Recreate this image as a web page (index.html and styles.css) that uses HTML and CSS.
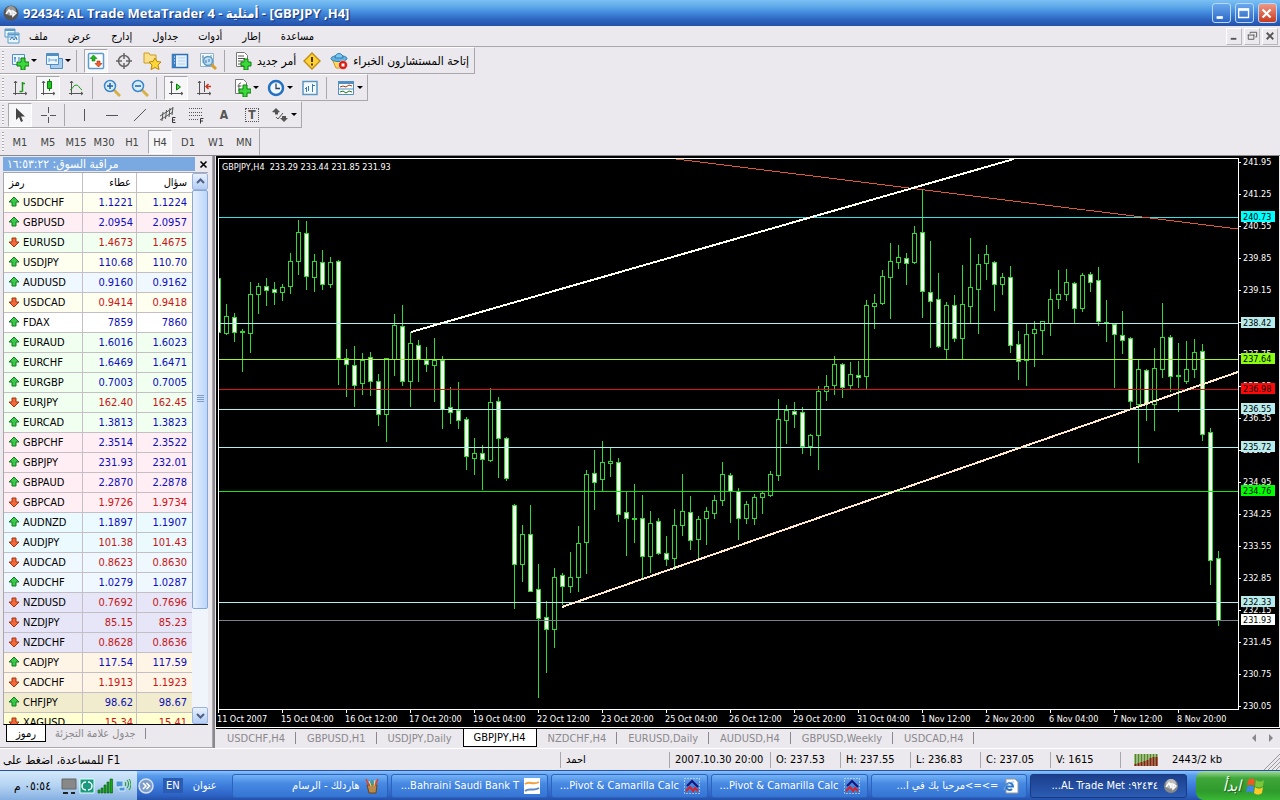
FILE: index.html
```html
<!DOCTYPE html>
<html lang="ar">
<head>
    <meta charset="UTF-8">
    <meta name="viewport" content="width=device-width, initial-scale=1.0">
    <title>MetaTrader 4</title>
    <link rel="stylesheet" href="styles.css">
</head>
<body>

<header class="titlebar">
    <svg class="icon" viewBox="0 0 16 16"><circle cx="8" cy="8" r="7.5" fill="#555"/><circle cx="8" cy="6" r="5" fill="#999"/><path d="M3 9l3-4 2 4M8 5v5M10 6l3 2-3 3z" stroke="#fff" stroke-width="1.5" fill="none"/></svg>
    <h1>92434: AL Trade MetaTrader 4 - <bdi>أمثلية</bdi> - [GBPJPY ,H4]</h1>
    <div class="window-buttons">
        <button aria-label="Minimize"><svg viewBox="0 0 19 19"><path d="M4 14h7" stroke="#fff" stroke-width="3"/></svg></button>
        <button aria-label="Maximize"><svg viewBox="0 0 19 19"><path d="M3 5v9h11V5" stroke="#fff" fill="none" stroke-width="1.5"/><path d="M2.300 5h12.400" stroke="#fff" stroke-width="3"/></svg></button>
        <button class="close" aria-label="Close"><svg viewBox="0 0 19 19"><path d="M4 5l9 9M13 5l-9 9" stroke="#fff" stroke-width="2.400"/></svg></button>
    </div>
</header>

<nav class="menu">
    <svg class="icon" viewBox="0 0 16 16"><path d="M1 1h10v8H1zM4 5h11v10H4z" fill="#eaf6ff" stroke="#5d9bc9"/><path d="M1 2h10M4 6.5h11" stroke="#5d9bc9" stroke-width="2"/><path d="M6 12l2-3 2 3 2-3 1 3" stroke="#3b78b5" fill="none"/></svg>
    <button>ملف</button>
    <button>عرض</button>
    <button>إدارج</button>
    <button>جداول</button>
    <button>أدوات</button>
    <button>إطار</button>
    <button>مساعدة</button>
    <div class="mdi-buttons">
        <button aria-label="Minimize chart"><svg viewBox="0 0 15 15"><path d="M4 10.5h6" stroke="#555" stroke-width="2"/></svg></button>
        <button aria-label="Restore chart"><svg viewBox="0 0 15 15"><path d="M5.5 5V3.5h7v5H11M3 6.5h7M3.5 6v5h6V6" stroke="#555" fill="none"/></svg></button>
        <button aria-label="Close chart"><svg viewBox="0 0 15 15"><path d="M4 4l7 7M11 4l-7 7" stroke="#555" stroke-width="2"/></svg></button>
    </div>
</nav>

<div class="toolbar">
    <button class="dropdown" aria-label="New chart"><svg viewBox="0 0 18 18"><path d="M1.500 2.500h12v10h-12z" fill="#eaf6ff" stroke="#4f8fc4"/><path d="M4 5v5M3 6h2M8 5v4" stroke="#3b78b5"/><path d="M10 6h4v4h4v4h-4v4h-4v-4H6v-4h4z" fill="#3ad83a" stroke="#0a7d0a"/></svg></button>
    <button class="dropdown" aria-label="Profiles"><svg viewBox="0 0 18 18"><path d="M5.5 6.5h12v10h-12z" fill="#a9cdea" stroke="#4f8fc4"/><path d="M1.5 1.5h12v11h-12z" fill="#eaf6ff" stroke="#4f8fc4"/><path d="M1 3h13" stroke="#4f8fc4" stroke-width="2"/><path d="M4 8h8M4 6v4M11 7v3" stroke="#6aa3d2"/></svg></button>
    <span class="sep"></span>
    <button class="pressed" aria-label="Market watch"><svg viewBox="0 0 18 18"><rect x="1.5" y="1.5" width="15" height="15" rx="1" fill="#fff" stroke="#5c9ccc" stroke-width="1.5"/><path d="M6.500 3L10 6.500H8V9H5V6.500H3z" fill="#22b422" stroke="#0a7d0a" stroke-width=".6"/><path d="M11.500 15L8 11.500h2V9h3v2.500h2z" fill="#f0602f" stroke="#a52a0a" stroke-width=".6"/></svg></button>
    <button aria-label="Data window"><svg viewBox="0 0 18 18"><circle cx="9" cy="9" r="5.5" fill="none" stroke="#666" stroke-width="1.5"/><path d="M9 1v6M9 11v6M1 9h6M11 9h6" stroke="#666" stroke-width="1.5"/></svg></button>
    <button aria-label="Navigator"><svg viewBox="0 0 18 18"><path d="M1 3V1h5l1 2h6v8H1z" fill="#fbe08a" stroke="#c89b25"/><path d="M12 6l2 3.500 4 .5-3 3 1 4.500-4-2-4 2 1-4.500-3-3 4-.5z" fill="#ffd735" stroke="#b98509"/></svg></button>
    <button aria-label="Terminal"><svg viewBox="0 0 18 18"><path d="M1.500 2.500h15v13h-15z" fill="#e4f2ff" stroke="#2f70b0" stroke-width="1.5"/><path d="M1 2.500h4v13H1z" fill="#3f7ec0"/><path d="M7 6h7M7 9h7M7 12h7" stroke="#b4cfe8"/><path d="M3 5h1M3 8h1M3 11h1" stroke="#fff"/></svg></button>
    <button aria-label="Strategy tester"><svg viewBox="0 0 18 18"><path d="M1.500 1.500h13v13h-13z" fill="#f5f9fc" stroke="#8fb3cf"/><path d="M4 3v8M3 5h2M12 3v5" stroke="#6b98bb"/><path d="M12 12l5 5" stroke="#d99f28" stroke-width="3"/><circle cx="9" cy="9" r="4.5" fill="#bfe0f5" stroke="#5c97c2" stroke-width="1.5"/><path d="M7 8v3M10 7v3" stroke="#3b78b5"/></svg></button>
    <span class="sep"></span>
    <button class="text-button"><svg viewBox="0 0 18 18"><path d="M2.500.5h8l3 3v11h-11z" fill="#fff" stroke="#777"/><path d="M4 4h6M4 6.500h7M4 9h5M4 12h4" stroke="#555"/><path d="M10 7h4v3h3v4h-3v4h-4v-4H7v-4h3z" fill="#3ad83a" stroke="#0a7d0a"/></svg>أمر جديد</button>
    <button aria-label="MetaEditor"><svg viewBox="0 0 18 18"><path d="M9 1l8 8-8 8-8-8z" fill="#ffd23a" stroke="#c18c10" stroke-width="1.4"/><path d="M9 5v5M9 11.500v2" stroke="#4d3a00" stroke-width="2"/></svg></button>
    <button class="text-button experts"><svg viewBox="0 0 18 18"><path d="M2 7h13l-3 9H6z" fill="#ffd95e" stroke="#c79a22"/><ellipse cx="9" cy="6.5" rx="8" ry="3" fill="#63b4e4" stroke="#2b7cb0"/><path d="M5 6c0-6 8-6 8 0z" fill="#7cc6ef" stroke="#2b7cb0"/><circle cx="13" cy="13" r="4.5" fill="#d61f14" stroke="#fff" stroke-width=".5"/><path d="M11.500 11.500h3v3h-3z" fill="#fff"/></svg>إتاحة المستشارون الخبراء</button>
</div>

<div class="toolbar">
    <button aria-label="Bar chart"><svg viewBox="0 0 18 18"><path d="M4.500 2v14M2 14.500h14M3 4l1.500-2L6 4M14 13l2 1.500-2 1.500" stroke="#555" fill="none"/><path d="M8.500 12.500h3M11.500 3v9.500M11 4.500h3" stroke="#179a17" stroke-width="1.5"/></svg></button>
    <button class="pressed" aria-label="Candlesticks"><svg viewBox="0 0 18 18"><path d="M4.500 2v14M2 14.500h14M3 4l1.500-2L6 4M14 13l2 1.500-2 1.500" stroke="#555" fill="none"/><path d="M10.500 0v12" stroke="#0a7d0a"/><path d="M8.500 2.500h4v7h-4z" fill="#22c422" stroke="#0a7d0a"/></svg></button>
    <button aria-label="Line chart"><svg viewBox="0 0 18 18"><path d="M4.500 2v14M2 14.500h14M3 4l1.500-2L6 4M14 13l2 1.500-2 1.500" stroke="#555" fill="none"/><path d="M3 11c3-1 3-5 6-5s3 3 6 5" stroke="#179a17" fill="none"/></svg></button>
    <span class="sep"></span>
    <button aria-label="Zoom in"><svg viewBox="0 0 18 18"><path d="M11 11l6 6" stroke="#d9b048" stroke-width="3"/><circle cx="7" cy="7" r="5.5" fill="#d8eeff" stroke="#3c86c8" stroke-width="1.5"/><path d="M4 7h6M7 4v6" stroke="#1f63ac" stroke-width="1.5"/></svg></button>
    <button aria-label="Zoom out"><svg viewBox="0 0 18 18"><path d="M11 11l6 6" stroke="#d9b048" stroke-width="3"/><circle cx="7" cy="7" r="5.5" fill="#d8eeff" stroke="#3c86c8" stroke-width="1.5"/><path d="M4 7h6" stroke="#1f63ac" stroke-width="1.5"/></svg></button>
    <span class="sep"></span>
    <button class="pressed" aria-label="Auto scroll"><svg viewBox="0 0 18 18"><path d="M4.500 2v14M2 14.500h14M3 4l1.500-2L6 4M14 13l2 1.500-2 1.500" stroke="#555" fill="none"/><path d="M9.500 5l4 3-4 3z" fill="#5ad85a" stroke="#0a7d0a"/></svg></button>
    <button aria-label="Chart shift"><svg viewBox="0 0 18 18"><path d="M4.500 2v14M2 14.500h14M3 4l1.500-2L6 4M14 13l2 1.500-2 1.500M9.500 2v11" stroke="#555" fill="none"/><path d="M16 7.500h-5M13.500 5L11 7.500l2.500 2.500" stroke="#c8371a" stroke-width="1.5" fill="none"/></svg></button>
    <span class="spacer"></span>
    <button class="dropdown" aria-label="Indicators"><svg viewBox="0 0 18 18"><path d="M2.500.5h8l3 3v11h-11z" fill="#fff" stroke="#777"/><path d="M8 4c-3 0-2 2-2 8M4.500 7h4" stroke="#555" fill="none"/><path d="M10 6h4v4h4v4h-4v4h-4v-4H6v-4h4z" fill="#3ad83a" stroke="#0a7d0a"/></svg></button>
    <button class="dropdown" aria-label="Periods"><svg viewBox="0 0 18 18"><circle cx="9" cy="9" r="7" fill="#eef6ff" stroke="#2170c2" stroke-width="2.5"/><path d="M9 4.500V9.500h4" stroke="#345" stroke-width="1.3" fill="none"/></svg></button>
    <button aria-label="Templates"><svg viewBox="0 0 18 18"><path d="M2 2.500h14v13H2z" fill="#f2f9ff" stroke="#5c97c2" stroke-width="1.5"/><path d="M5.500 8v5M7.500 7v5M11.500 5v8M4 9.500h2M11 6.500h3" stroke="#3b78b5"/></svg></button>
    <span class="sep"></span>
    <button class="dropdown" aria-label="Layout"><svg viewBox="0 0 18 18"><path d="M1.500 2.500h15v13h-15z" fill="#fff" stroke="#4f8fc4"/><path d="M1 3.500h16" stroke="#4f8fc4" stroke-width="3"/><path d="M3 8l3-1 3 1 3-2 3 1" stroke="#a2381e" fill="none"/><path d="M2 10h14" stroke="#4f8fc4"/><path d="M3 13l3-1 3 2 3-2 3 1" stroke="#1b7a1b" fill="none"/></svg></button>
</div>

<div class="toolbar">
    <button class="pressed" aria-label="Cursor"><svg viewBox="0 0 18 18"><path d="M5 2v12l3-3 2 5 2-1-2-4.500h4z" fill="#444"/></svg></button>
    <button aria-label="Crosshair"><svg viewBox="0 0 18 18"><path d="M9.500 1v6M9.500 11v6M2 9.500h6M11 9.500h6" stroke="#555"/></svg></button>
    <span class="sep"></span>
    <button aria-label="Vertical line"><svg viewBox="0 0 18 18"><path d="M9.500 3v12" stroke="#555"/></svg></button>
    <button aria-label="Horizontal line"><svg viewBox="0 0 18 18"><path d="M3 9.500h12" stroke="#555"/></svg></button>
    <button aria-label="Trendline"><svg viewBox="0 0 18 18"><path d="M3 15L15 3" stroke="#555"/></svg></button>
    <button aria-label="Equidistant channel"><svg viewBox="0 0 18 18"><path d="M1 10L14 2M1 14l13-8M4 6l-1 9M7.500 4l-1 9M11 2l-1 9M14 1l-1 8" stroke="#555" fill="none"/><path d="M16.500 11.500h-3v5h3M13.500 14H16" stroke="#333" fill="none"/></svg></button>
    <button aria-label="Fibonacci"><svg viewBox="0 0 18 18"><path d="M2 2.500h14M2 6.500h14M2 9.500h14M2 13.500h9" stroke="#555" stroke-dasharray="1 1"/><path d="M16.500 12.500h-3v5M13.500 15H16" stroke="#333" fill="none"/></svg></button>
    <button class="letter">A</button>
    <button class="letter boxed">T</button>
    <button class="dropdown" aria-label="Arrows"><svg viewBox="0 0 18 18"><path d="M5 2l4 4-2 .5v2H4v-2L1 6z" fill="#555"/><path d="M13 16l-4-4h2v-2h4v2h2z" fill="#555"/><path d="M5 11l2 2 5-6" stroke="#555" fill="none"/></svg></button>
</div>

<div class="toolbar periods">
    <button>M1</button>
    <button>M5</button>
    <button>M15</button>
    <button>M30</button>
    <button>H1</button>
    <button class="pressed">H4</button>
    <button>D1</button>
    <button>W1</button>
    <button>MN</button>
</div>

<main class="workspace">
    <section class="watch">
        <div class="watch-title">
            <span dir="rtl">مراقبة السوق: ١٦:٥٣:٢٢</span>
            <button aria-label="Close panel"><svg viewBox="0 0 9 9"><path d="M1.500 1.500l6 6M7.500 1.500l-6 6" stroke="#000" stroke-width="1.6"/></svg></button>
        </div>
        <div class="watch-body">
            <div class="table-wrap">
                <table>
                    <thead>
                        <tr><th>رمز</th><th>عطاء</th><th>سؤال</th></tr>
                    </thead>
                    <tbody id="quotes"></tbody>
                </table>
            </div>
            <div class="scrollbar">
                <button aria-label="Scroll up"><svg viewBox="0 0 9 9"><path d="M1 6l3.500-3.500L8 6" stroke="#4d6185" stroke-width="2" fill="none"/></svg></button>
                <div class="track"><div class="thumb"><i></i></div></div>
                <button aria-label="Scroll down"><svg viewBox="0 0 9 9"><path d="M1 3l3.500 3.500L8 3" stroke="#4d6185" stroke-width="2" fill="none"/></svg></button>
            </div>
        </div>
        <div class="watch-tabs">
            <button class="active">رموز</button>
            <button>جدول علامة التجزئة</button>
        </div>
    </section>

    <section class="chart-pane">
        <div class="chart-box"><svg id="chart"></svg></div>
        <div class="chart-tabs">
            <button>USDCHF,H4</button>
            <button>GBPUSD,H1</button>
            <button class="before">USDJPY,Daily</button>
            <button class="active">GBPJPY,H4</button>
            <button>NZDCHF,H4</button>
            <button>EURUSD,Daily</button>
            <button>AUDUSD,H4</button>
            <button>GBPUSD,Weekly</button>
            <button>USDCAD,H4</button>
            <div class="tab-arrows">
                <svg viewBox="0 0 24 8"><path d="M5 0v8L1 4zM18 0v8l4-4z" fill="#888"/></svg>
            </div>
        </div>
    </section>
</main>

<div class="statusbar">
    <span class="help"><bdi dir="rtl">F1 للمساعدة، اضغط على</bdi></span>
    <span class="cell user">احمد</span>
    <span class="cell time">2007.10.30 20:00</span>
    <span class="cell">O: 237.53</span>
    <span class="cell">H: 237.55</span>
    <span class="cell">L: 236.83</span>
    <span class="cell">C: 237.05</span>
    <span class="cell">V: 1615</span>
    <span class="cell traffic">
        <svg viewBox="0 0 24 12"><path d="M1.500 0v12M4.500 0v12M7.500 0v12M10.500 0v12M13.500 0v12M16.500 0v12M19.500 0v12M22.500 0v12" stroke="#4f8a1c" stroke-width="2"/><path d="M1.500 10v2M4.500 9v3M7.500 8v4M10.500 7v5M13.500 6v6M16.500 4v8M19.500 3v9M22.500 3v9" stroke="#8c1c10" stroke-width="2"/></svg>
        2443/2 kb
    </span>
    <svg class="grip" viewBox="0 0 16 16"><path d="M0 16L16 0M4 16L16 4M8 16l8-8M12 16l4-4" stroke="#999"/></svg>
</div>

<footer class="taskbar">
    <div class="tray">
        <span class="clock" dir="rtl">٠٥:٥٤ م</span>
        <svg viewBox="0 0 16 16"><path d="M1 1h14v10H1z" fill="#888" stroke="#666"/><path d="M2 15h5M10 15h4" stroke="#222" stroke-width="2"/></svg>
        <svg viewBox="0 0 16 16"><rect x="1" y="1" width="14" height="14" fill="#1b9a80"/><path d="M1 1h14v14H1z" fill="none" stroke="#d9fff6"/><path d="M7 4a4 4 0 0 0 0 8M9 4a4 4 0 0 1 0 8" stroke="#fff" fill="none" stroke-width="1.5"/></svg>
        <svg viewBox="0 0 16 16"><path d="M1 12h2v3H1zM4 10h2v5H4zM7 7h2v8H7zM10 4h2v11h-2zM13 1h2.500v14H13z" fill="#19a619" stroke="#08590a" stroke-width=".6"/></svg>
        <svg viewBox="0 0 16 16"><path d="M1 3h7v6H1zM4 9h6v4H4z" fill="#4f97d6" stroke="#cfe6fa"/><path d="M10 4c1 1 1 3 0 4M12 2c2 2 2 6 0 8M14 1c2.500 3 2.500 8 0 11" stroke="#189a18" fill="none"/></svg>
    </div>
    <button class="chevron" aria-label="Show hidden icons"><svg viewBox="0 0 16 16"><circle cx="8" cy="8" r="7" fill="#7e9cc8" stroke="#d3e2f5" stroke-width="1.5"/><path d="M5 5l3 3-3 3M8.500 5l3 3-3 3" stroke="#fff" fill="none" stroke-width="1.5"/></svg></button>
    <span class="lang">EN</span>
    <span class="address">عنوان</span>
    <div class="tasks">
        <button dir="rtl"><svg viewBox="0 0 16 16"><path d="M3 7h10l-1 8H5z" fill="#b98a4a" stroke="#6b4417"/><path d="M5 8L2 1M11 8l3-7" stroke="#e0442a" stroke-width="1.6"/><path d="M8 8V2" stroke="#4aa844" stroke-width="1.6"/><path d="M7 8L5 3M10 8l1-6" stroke="#ffe08a"/></svg><span>هاردلك - الرسام</span></button>
        <button dir="rtl"><svg viewBox="0 0 16 16"><path d="M0 0h16v16H0z" fill="#fff"/><path d="M1 6c5-4 7 2 14-2" stroke="#f0a040" stroke-width="2" fill="none"/><path d="M1 13c5-4 8 1 14-3" stroke="#5d87c9" stroke-width="2" fill="none"/></svg><span>Bahraini Saudi Bank T...</span></button>
        <button dir="rtl"><svg viewBox="0 0 16 16"><path d="M.5.5h15v15H.5z" fill="none" stroke="#fff" stroke-dasharray="1 2"/><path d="M3 8l5-5 6 6" stroke="#15157a" stroke-width="2" fill="none"/><path d="M2 13l4-4 3 4 2-3 3 3" stroke="#d22" stroke-width="2" fill="none"/></svg><span>Pivot &amp; Camarilla Calc...</span></button>
        <button dir="rtl"><svg viewBox="0 0 16 16"><path d="M.5.5h15v15H.5z" fill="none" stroke="#fff" stroke-dasharray="1 2"/><path d="M3 8l5-5 6 6" stroke="#15157a" stroke-width="2" fill="none"/><path d="M2 13l4-4 3 4 2-3 3 3" stroke="#d22" stroke-width="2" fill="none"/></svg><span>Pivot &amp; Camarilla Calc...</span></button>
        <button dir="rtl"><svg viewBox="0 0 16 16"><path d="M3 1h9l3 3v11H3z" fill="#fff" stroke="#999"/><path d="M3 8.500h7a3.500 3.500 0 1 0-1 2.500" stroke="#2b74c8" stroke-width="2" fill="none"/><path d="M1 12C2 7 6 4 11 4" stroke="#7db4ea" fill="none"/></svg><span>=&gt;=&gt;مرحبا بك في ا...</span></button>
        <button class="active" dir="rtl"><svg viewBox="0 0 16 16"><circle cx="8" cy="8" r="7" fill="#888"/><circle cx="8" cy="6" r="5" fill="#bbb"/><path d="M3 9l3-4 2 4M8 5v5M10 6l3 2-3 3z" stroke="#fff" stroke-width="1.5" fill="none"/></svg><span>٩٢٤٣٤: AL Trade Met...</span></button>
    </div>
    <button class="start" dir="rtl">
        <svg viewBox="0 0 20 20"><path d="M2 4c3-2 5-2 7 0L8 10c-2-2-4-2-7 0z" fill="#ee5a24"/><path d="M10 4c3 2 5 2 8 0l-1 6c-3 2-5 2-8 0z" fill="#7ec53a"/><path d="M1 11c3-2 5-2 7 0l-1 6c-2-2-4-2-7 0z" fill="#3f86e8"/><path d="M9 11c3 2 5 2 8 0l-1 6c-3 2-5 2-8 0z" fill="#ffc928"/></svg>
        <span>ابدأ</span>
    </button>
</footer>

<script src="script.js"></script>
</body>
</html>
```

FILE: styles.css
```css
* {
    box-sizing: border-box;
}
body {
    margin: 0;
    height: 100vh;
    display: flex;
    flex-direction: column;
    overflow: hidden;
    background-color: #ebe9ed;
    font-family: "DejaVu Sans Condensed", "DejaVu Sans", sans-serif;
    font-size: 11px;
    color: #000;
}
button {
    font: inherit;
    color: inherit;
    background: none;
    border: none;
    padding: 0;
    white-space: nowrap;
}
svg {
    flex: none;
    display: block;
}

/* title bar */
.titlebar {
    flex: none;
    height: 26px;
    display: flex;
    align-items: center;
    padding: 0 3px;
    background: linear-gradient(#7cc0f4 0%, #5fa9ea 25%, #4088dc 50%, #2e66c0 75%, #2450a8 100%);
}
.titlebar .icon {
    width: 16px;
    height: 16px;
}
.titlebar h1 {
    flex: 1;
    margin: 0 0 0 4px;
    font-family: "Open Sans", "DejaVu Sans Condensed", sans-serif;
    font-size: 13px;
    font-weight: bold;
    line-height: 26px;
    color: #fff;
    text-shadow: 1px 1px 1px #12307c;
}
.window-buttons {
    display: flex;
    gap: 4px;
}
.window-buttons button {
    width: 19px;
    height: 20px;
    border: 1px solid #b8d8fb;
    border-radius: 3px;
    background: linear-gradient(#69a8ee, #2a66c4);
}
.window-buttons .close {
    background: linear-gradient(#ee9a88, #c83a1e);
}

/* menu */
.menu {
    flex: none;
    height: 21px;
    display: flex;
    align-items: center;
    gap: 20px;
    padding: 0 2px 0 4px;
    border-bottom: 1px solid #a9a7ab;
}
.menu .icon {
    width: 16px;
    height: 16px;
    margin-right: -11px;
}
.mdi-buttons {
    display: flex;
    gap: 2px;
    margin-left: auto;
}
.mdi-buttons button {
    width: 16px;
    height: 17px;
    border: 1px solid;
    border-color: #fff #b9b7bb #b9b7bb #fff;
}

/* toolbars */
.toolbar {
    flex: none;
    align-self: flex-start;
    height: 27px;
    display: flex;
    align-items: center;
    gap: 4px;
    padding: 0 3px 0 2px;
    border-top: 1px solid #fff;
    border-right: 1px solid #a9a7ab;
    border-bottom: 1px solid #a9a7ab;
}
.toolbar::before {
    content: "";
    width: 2px;
    height: 20px;
    background: repeating-linear-gradient(#a9a7ab 0 1px, #f8f8f8 1px 3px);
}
.toolbar button {
    width: 24px;
    height: 24px;
    display: flex;
    align-items: center;
    justify-content: center;
}
.toolbar svg {
    width: 18px;
    height: 18px;
}
.toolbar .pressed {
    background-color: #f7f6f8;
    border: 1px solid;
    border-color: #a9a7ab #fff #fff #a9a7ab;
}
.toolbar .dropdown {
    width: 30px;
    justify-content: flex-start;
    gap: 2px;
    padding-left: 3px;
}
.toolbar .dropdown::after {
    content: "";
    border: 3px solid transparent;
    border-top-color: #000;
    border-bottom: none;
}
.toolbar .text-button {
    width: auto;
    gap: 5px;
    padding-left: 2px;
    font-size: 12px;
}
.toolbar .experts {
    padding-right: 2px;
}
.sep {
    width: 4px;
    height: 22px;
    border-left: 1px solid #a9a7ab;
}
.spacer {
    width: 6px;
}
.toolbar .letter {
    font-size: 12px;
    font-weight: bold;
    color: #555;
}
.toolbar .boxed {
    width: 14px;
    height: 14px;
    margin: 0 5px;
    border: 1px dotted #555;
}
.periods button {
    color: #444;
}
.periods {
    border-bottom: none;
}

/* market watch */
.workspace {
    flex: 1;
    min-height: 0;
    display: flex;
    border-top: 1px solid #8a888c;
    border-bottom: 1px solid #fff;
}
.watch {
    width: 213px;
    flex: none;
    display: flex;
    flex-direction: column;
    padding: 1px 4px 2px 3px;
    border-right: 1px solid #a9a7ab;
    border-bottom: 1px solid #a9a7ab;
}
.watch-title {
    flex: none;
    height: 14px;
    display: flex;
    align-items: center;
    justify-content: space-between;
    color: #fff;
    background: linear-gradient(to right, #79a9e0 192px, transparent 192px);
    padding: 0 0 0 4px;
}
.watch-title span {
    font-size: 12px;
    line-height: 14px;
}
.watch-title button,
.watch-title svg {
    width: 9px;
    height: 9px;
}
.watch-body {
    flex: 1;
    min-height: 0;
    display: flex;
    margin-top: 1px;
    border-left: 1px solid #a9a7ab;
    border-top: 1px solid #a9a7ab;
    border-bottom: 1px solid #000;
    background-color: #fff;
}
.table-wrap {
    flex: 1;
    overflow: hidden;
}
table {
    width: 100%;
    table-layout: fixed;
    border-collapse: separate;
    border-spacing: 0;
}
th,
td {
    height: 20px;
    padding: 0 3px;
    line-height: 14px;
    text-align: right;
    font-weight: normal;
    border-right: 1px solid #c4bfc4;
    border-bottom: 1px solid #c4bfc4;
}
th:first-child,
td:first-child {
    width: 79px;
    text-align: left;
}
td:first-child {
    padding-left: 4px;
}
th:nth-child(2) {
    width: 54px;
}
th:last-child,
td:last-child {
    padding-right: 5px;
    border-right: none;
}
th {
    padding: 0 5px;
}
td:first-child svg {
    display: inline-block;
    width: 12px;
    height: 12px;
    margin-right: 3px;
    vertical-align: -2px;
}
.up {
    color: #0c0cc0;
}
.down {
    color: #cc1414;
}
.ivory { background-color: #fffff0; }
.pink { background-color: #ffeef4; }
.honey { background-color: #f0fff0; }
.alice { background-color: #f0f8ff; }
.cyan { background-color: #eafaff; }
.lavender { background-color: #e6e6f8; }
.lace { background-color: #fff5e6; }
.khaki { background-color: #f0eccd; }
.yellow { background-color: #ffffd2; }

.scrollbar {
    width: 16px;
    flex: none;
    display: flex;
    flex-direction: column;
    background-color: #f0f5fc;
}
.scrollbar button {
    height: 17px;
    display: flex;
    align-items: center;
    justify-content: center;
    border: 1px solid #9ab4dc;
    border-radius: 2px;
    background: linear-gradient(#e8f0fd, #b4cdf4);
}
.scrollbar button svg {
    width: 9px;
    height: 9px;
}
.track {
    flex: 1;
}
.thumb {
    height: 81%;
    display: flex;
    align-items: center;
    justify-content: center;
    border: 1px solid #88a6d4;
    border-radius: 2px;
    background: linear-gradient(to right, #e6f0fd, #bcd6fb);
}
.thumb i {
    width: 7px;
    height: 8px;
    background: repeating-linear-gradient(#7f9ccb 0 1px, transparent 1px 2px);
}
.watch-tabs {
    flex: none;
    display: flex;
    height: 20px;
    padding-left: 3px;
}
.watch-tabs button {
    height: 17px;
    padding: 0 9px;
    display: flex;
    align-items: center;
    color: #8a888c;
}
.watch-tabs button::after {
    content: "";
    height: 11px;
    margin-left: 9px;
    border-right: 1px solid #8a888c;
}
.watch-tabs .active {
    color: #000;
    background-color: #fff;
    border: 1px solid #000;
    border-top: none;
}
.watch-tabs .active::after {
    display: none;
}

/* chart */
.chart-pane {
    flex: 1;
    min-width: 0;
    display: flex;
    flex-direction: column;
    padding-left: 1px;
    border-left: 2px solid #8a888c;
}
.chart-box {
    flex: 1;
    min-height: 0;
    margin-right: 1px;
    background-color: #000;
    border-bottom: 1px solid #fff;
}
#chart {
    width: 100%;
    height: 100%;
    font-size: 9px;
}
#chart text {
    fill: #fff;
}
#chart text.dark {
    fill: #000;
}
.chart-tabs {
    flex: none;
    height: 20px;
    display: flex;
    align-items: flex-start;
    border-top: 1px solid #000;
    color: #8a888c;
}
.chart-tabs button {
    height: 18px;
    padding: 0 11px;
    display: flex;
    align-items: center;
}
.chart-tabs button::after {
    content: "";
    height: 12px;
    margin-right: -11px;
    margin-left: 10px;
    border-right: 1px solid #8a888c;
}
.chart-tabs .before::after,
.chart-tabs .active::after {
    display: none;
}
.chart-tabs .active {
    padding: 0 10px;
    background-color: #fff;
    border: 1px solid #000;
    border-top: none;
    color: #000;
}
.tab-arrows {
    margin: 5px 5px 0 auto;
}
.tab-arrows svg {
    width: 24px;
    height: 8px;
}

/* status bar */
.statusbar {
    flex: none;
    height: 21px;
    display: flex;
    align-items: center;
}
.help {
    flex: 1;
    padding-left: 3px;
    font-size: 12px;
}
.cell {
    width: 70px;
    height: 16px;
    padding-left: 5px;
    line-height: 16px;
    white-space: nowrap;
    border-left: 1px solid #a9a7ab;
}
.cell.user {
    width: 109px;
}
.cell.time {
    width: 101px;
}
.cell.traffic {
    width: 144px;
    display: flex;
    align-items: center;
    gap: 14px;
    padding-left: 13px;
}
.traffic svg {
    width: 24px;
    height: 12px;
}
.grip {
    width: 16px;
    height: 16px;
    align-self: flex-end;
}

/* taskbar */
.taskbar {
    flex: none;
    height: 30px;
    display: flex;
    align-items: center;
    color: #fff;
    border-top: 1px solid #2450a8;
    background: linear-gradient(#8cc4fb 0%, #5a9cec 15%, #3d7ddc 50%, #2c62c4 85%, #2450a8 100%);
}
.tray {
    width: 137px;
    height: 29px;
    display: flex;
    align-items: center;
    gap: 2px;
    padding: 0 6px 0 14px;
    color: #000;
    background: linear-gradient(#d3e9fb 0%, #b5d3f2 50%, #85b0e2 100%);
}
.tray svg,
.chevron svg {
    width: 16px;
    height: 16px;
}
.clock {
    flex: 1;
    font-size: 12px;
    text-align: left;
    white-space: nowrap;
}
.chevron {
    margin-left: 1px;
}
.lang {
    margin-left: 9px;
    padding: 0 3px;
    line-height: 15px;
    background-color: #2a5cb4;
}
.address {
    flex: none;
    margin: 0 15px 0 10px;
}
.tasks {
    flex: 1;
    min-width: 0;
    display: flex;
    gap: 3px;
}
.tasks button {
    flex: 1;
    min-width: 0;
    height: 24px;
    display: flex;
    align-items: center;
    gap: 5px;
    padding: 0 7px;
    border: 1px solid #2d63bd;
    border-radius: 3px;
    background: linear-gradient(#74b3f6, #4688e2 40%, #3574d3);
}
.tasks .active {
    border-color: #173a80;
    background: linear-gradient(#1c3f8c, #2b5cb4);
}
.tasks svg {
    width: 16px;
    height: 16px;
}
.start {
    width: 84px;
    height: 29px;
    flex: none;
    margin-left: 9px;
    display: flex;
    align-items: center;
    gap: 5px;
    padding: 0 14px;
    font-size: 15px;
    font-style: italic;
    text-shadow: 1px 1px 1px #185a18;
    border-radius: 8px 0 0 8px;
    background: linear-gradient(#a4dc9c 0%, #3fa63a 25%, #2f9a2c 70%, #39b834 100%);
}
.start svg {
    width: 20px;
    height: 20px;
}
```

FILE: script.js
```js
// symbol, bid, ask, direction, row colour
const quotes = [
    ['USDCHF', '1.1221', '1.1224', 'up', 'ivory'],
    ['GBPUSD', '2.0954', '2.0957', 'up', 'pink'],
    ['EURUSD', '1.4673', '1.4675', 'down', 'honey'],
    ['USDJPY', '110.68', '110.70', 'up', 'ivory'],
    ['AUDUSD', '0.9160', '0.9162', 'up', 'alice'],
    ['USDCAD', '0.9414', '0.9418', 'down', 'ivory'],
    ['FDAX', '7859', '7860', 'up', ''],
    ['EURAUD', '1.6016', '1.6023', 'up', 'honey'],
    ['EURCHF', '1.6469', '1.6471', 'up', 'honey'],
    ['EURGBP', '0.7003', '0.7005', 'up', 'honey'],
    ['EURJPY', '162.40', '162.45', 'down', 'honey'],
    ['EURCAD', '1.3813', '1.3823', 'up', 'honey'],
    ['GBPCHF', '2.3514', '2.3522', 'up', 'pink'],
    ['GBPJPY', '231.93', '232.01', 'up', 'pink'],
    ['GBPAUD', '2.2870', '2.2878', 'up', 'pink'],
    ['GBPCAD', '1.9726', '1.9734', 'down', 'pink'],
    ['AUDNZD', '1.1897', '1.1907', 'up', 'cyan'],
    ['AUDJPY', '101.38', '101.43', 'down', 'cyan'],
    ['AUDCAD', '0.8623', '0.8630', 'down', 'alice'],
    ['AUDCHF', '1.0279', '1.0287', 'up', 'alice'],
    ['NZDUSD', '0.7692', '0.7696', 'down', 'lavender'],
    ['NZDJPY', '85.15', '85.23', 'down', 'lavender'],
    ['NZDCHF', '0.8628', '0.8636', 'down', 'lavender'],
    ['CADJPY', '117.54', '117.59', 'up', 'lace'],
    ['CADCHF', '1.1913', '1.1923', 'down', 'lace'],
    ['CHFJPY', '98.62', '98.67', 'up', 'khaki'],
    ['XAGUSD', '15.34', '15.41', 'down', 'yellow']
];

const arrows = {
    up: '<svg viewBox="0 0 12 12"><path d="M6 1l5 5H8v4H4V6H1z" fill="#3cc84a" stroke="#0c7a1c"/></svg>',
    down: '<svg viewBox="0 0 12 12"><path d="M6 11L1 6h3V2h4v4h3z" fill="#f06a3c" stroke="#a8300c"/></svg>'
};

document.getElementById('quotes').innerHTML = quotes.map(q =>
    `<tr class="${q[4]}"><td>${arrows[q[3]]}${q[0]}</td><td class="${q[3]}">${q[1]}</td><td class="${q[3]}">${q[2]}</td></tr>`
).join('');

// high, body top, body bottom, low, 1 = bearish (filled)
const candles = [
    [277,278,332,355,1],[304,316,333,334,0],[313,317,332,341,1],[329,331,332,371,1],[282,294,333,352,0],
    [283,286,294,313,0],[278,286,290,305,1],[282,289,292,304,1],[284,287,292,300,0],[253,261,286,293,0],
    [220,232,261,274,0],[221,233,276,289,1],[254,261,277,291,0],[250,262,284,289,1],[257,262,284,287,0],
    [260,261,358,384,1],[349,358,364,396,1],[346,365,385,406,1],[353,360,383,394,0],[352,357,381,395,1],
    [374,381,414,425,1],[358,358,414,441,0],[314,325,359,375,0],[305,326,381,385,1],[332,343,381,406,0],
    [340,345,359,381,1],[347,360,364,371,1],[338,360,365,401,0],[356,360,409,428,1],[387,407,412,423,1],
    [382,410,420,428,1],[417,419,456,469,1],[438,453,458,474,0],[445,453,459,489,1],[388,402,460,461,0],
    [397,401,438,477,1],[437,438,478,480,1],[504,505,564,608,1],[525,534,564,581,0],[505,534,591,591,1],
    [564,589,618,697,1],[601,617,629,672,1],[568,577,629,647,0],[573,575,586,604,1],[552,577,586,592,0],
    [526,543,577,591,0],[470,474,542,573,0],[450,473,482,509,1],[441,462,479,491,0],[448,461,463,476,0],
    [458,462,514,521,1],[491,512,518,555,1],[484,518,519,542,1],[495,518,556,579,1],[511,523,556,572,0],
    [518,521,553,554,1],[536,553,559,565,1],[509,525,558,569,0],[474,511,525,535,0],[496,512,540,549,1],
    [516,519,539,560,0],[507,511,518,544,0],[495,500,513,518,0],[462,474,500,505,0],[473,475,491,522,1],
    [488,491,518,539,1],[501,504,518,523,0],[494,497,518,524,0],[492,493,497,513,0],[471,474,495,496,0],
    [399,419,475,480,0],[405,410,420,443,0],[402,411,414,427,1],[407,412,446,453,1],[434,435,446,455,0],
    [386,391,435,469,0],[375,386,391,400,0],[356,364,385,394,0],[363,364,387,397,1],[362,374,385,389,0],
    [361,375,377,387,1],[300,305,376,389,0],[294,303,306,328,0],[270,276,303,304,0],[243,261,277,318,0],
    [245,257,262,268,0],[253,258,263,284,1],[226,233,262,263,0],[189,232,291,317,1],[241,292,301,347,1],
    [273,299,346,347,1],[302,305,349,359,0],[295,305,338,341,1],[265,304,338,358,0],[238,287,306,322,0],
    [254,264,289,333,0],[245,254,263,279,0],[261,262,284,310,1],[273,277,284,294,0],[266,277,345,352,1],
    [331,344,361,379,1],[323,334,360,385,0],[321,329,333,366,0],[321,321,330,354,0],[289,299,323,335,0],
    [270,294,299,308,0],[269,282,294,300,0],[282,283,308,323,1],[273,275,308,311,0],[272,274,282,291,1],
    [267,280,321,325,1],[300,322,323,341,1],[324,324,334,387,1],[311,335,340,353,1],[337,338,401,408,1],
    [359,369,404,462,0],[369,370,403,420,1],[348,368,404,430,0],[303,337,369,377,0],[335,337,376,391,1],
    [343,375,376,411,1],[341,369,381,383,0],[339,352,369,377,0],[344,351,434,440,1],[428,432,560,584,1],
    [551,558,620,625,1]
];

// price, y, line colour, label colour
const levels = [
    ['240.73', 217, '#30e4e8', '#00ffff'],
    ['238.42', 323, '#afeeee', '#b8ecec'],
    ['237.64', 359, '#a4f034', '#8cfc10'],
    ['236.98', 389, '#dc1414', '#ff0808'],
    ['236.55', 409, '#afeeee', '#b8ecec'],
    ['235.72', 447, '#afeeee', '#b8ecec'],
    ['234.76', 491, '#14e414', '#00ff00'],
    ['232.33', 602, '#afeeee', '#b8ecec'],
    ['231.93', 620, '#77828c', '#ffffff']
];

const times = ['11 Oct 2007', '15 Oct 04:00', '16 Oct 12:00', '17 Oct 20:00', '19 Oct 04:00', '22 Oct 12:00',
    '23 Oct 20:00', '25 Oct 04:00', '26 Oct 12:00', '29 Oct 20:00', '31 Oct 04:00', '1 Nov 12:00',
    '2 Nov 20:00', '6 Nov 04:00', '7 Nov 12:00', '8 Nov 20:00'];

const chart = document.getElementById('chart');

function drawChart() {
    const left = 218, top = 158, bottom = 709;
    const right = 216 + chart.clientWidth - 41;
    const rect = (x, y, w, h, c) => `<rect x="${x}" y="${y}" width="${w}" height="${h}" fill="${c}"/>`;
    let out = '';

    candles.forEach((c, i) => {
        const x = left + i * 8;
        out += rect(x, c[0], 1, c[3] - c[0] + 1, '#32d832');
        out += rect(x - 2, c[1], 5, c[2] - c[1] + 1, '#32d832');
        if (c[2] - c[1] > 1) {
            out += rect(x - 1, c[1] + 1, 3, c[2] - c[1] - 1, c[4] ? '#f4fff0' : '#000');
        }
    });
    out += rect(216, top, 2, bottom - top, '#000');

    levels.forEach(l => out += rect(left, l[1], right - left, 1, l[2]));

    out += '<path d="M676 159L1238 229" stroke="#e0582c"/>';
    out += '<path d="M411 332L1014 159" stroke="#fffff0" stroke-width="2"/>';
    out += '<path d="M562 607L1238 372" stroke="#ffe8cc" stroke-width="2"/>';

    out += rect(left, top, right - left, 1, '#fff') + rect(left, bottom, right - left + 1, 1, '#fff');
    out += rect(left, top, 1, bottom - top, '#fff') + rect(right, top, 1, bottom - top, '#fff');

    for (let i = 0; i < 18; i++) {
        const y = 162 + i * 32;
        out += rect(right, y, 3, 1, '#fff');
        out += `<text x="${right + 5}" y="${y + 3}">${(241.95 - i * 0.7).toFixed(2)}</text>`;
    }
    levels.forEach(l => {
        out += rect(right + 3, l[1] - 6, 34, 11, l[3]);
        out += `<text class="dark" x="${right + 5}" y="${l[1] + 3}">${l[0]}</text>`;
    });
    times.forEach((t, i) => {
        out += rect(left + i * 64, bottom, 1, 4, '#fff');
        out += `<text x="${left + i * 64 - 1}" y="722">${t}</text>`;
    });
    out += '<text x="222" y="170">GBPJPY,H4&#160; 233.29 233.44 231.85 231.93</text>';

    chart.innerHTML = `<g transform="translate(-216 -156)" shape-rendering="crispEdges">${out}</g>`;
}

drawChart();
window.addEventListener('resize', drawChart);
```
